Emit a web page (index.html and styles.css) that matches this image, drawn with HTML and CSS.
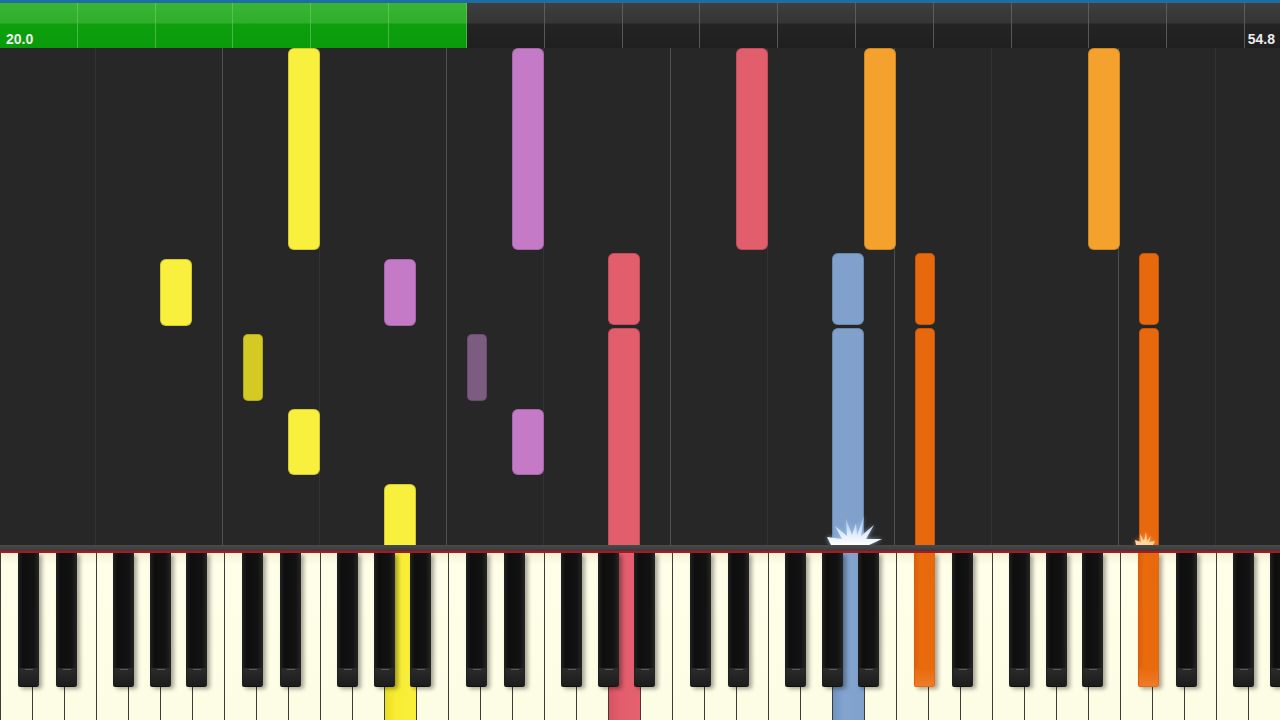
FILE: index.html
```html
<!DOCTYPE html>
<html lang="en">
<head>
<meta charset="utf-8">
<title>Piano roll</title>
<link rel="stylesheet" href="styles.css">
</head>
<body>
<div class="screen">
  <header class="timeline">
    <div class="progress"><span class="time">20.0</span></div>
    <div class="remaining"><span class="time">54.8</span></div>
  </header>

  <main class="roll">
    <div class="note w yellow" style="left:287.5px;top:0;height:202px"></div>
    <div class="note w purple" style="left:511.5px;top:0;height:202px"></div>
    <div class="note w red" style="left:735.5px;top:0;height:202px"></div>
    <div class="note w amber" style="left:863.5px;top:0;height:202px"></div>
    <div class="note w amber" style="left:1087.5px;top:0;height:202px"></div>

    <div class="note w yellow" style="left:159.5px;top:211px;height:67px"></div>
    <div class="note w purple" style="left:383.5px;top:211px;height:67px"></div>
    <div class="note w red" style="left:607.5px;top:205px;height:72px"></div>
    <div class="note w red" style="left:607.5px;top:280px;height:240px"></div>
    <div class="note w blue" style="left:831.5px;top:205px;height:72px"></div>
    <div class="note w blue" style="left:831.5px;top:280px;height:240px"></div>
    <div class="note b orange" style="left:914.5px;top:205px;height:72px"></div>
    <div class="note b orange" style="left:914.5px;top:280px;height:240px"></div>
    <div class="note b orange" style="left:1138.5px;top:205px;height:72px"></div>
    <div class="note b orange" style="left:1138.5px;top:280px;height:240px"></div>

    <div class="note b yellow-dim" style="left:242.5px;top:286px;height:67px"></div>
    <div class="note b purple-dim" style="left:466.5px;top:286px;height:67px"></div>

    <div class="note w yellow" style="left:287.5px;top:361px;height:66px"></div>
    <div class="note w purple" style="left:511.5px;top:361px;height:66px"></div>
    <div class="note w yellow" style="left:383.5px;top:436px;height:80px"></div>

    <svg class="flare blue-flare" viewBox="0 0 56 30" width="56" height="30" aria-hidden="true">
      <defs>
        <linearGradient id="fb" x1="0" y1="1" x2="0" y2="0">
          <stop offset="0" stop-color="#ffffff"/>
          <stop offset="0.45" stop-color="#dce9fb"/>
          <stop offset="1" stop-color="#8fb4e4"/>
        </linearGradient>
      </defs>
      <polygon fill="url(#fb)" points="4,30 0,22 15,24 8,11 20,21 19,4 25,20 29,8 30,20 37,1 34,21 47,10 39,24 55,24 42,30"/>
    </svg>
    <svg class="flare orange-flare" viewBox="0 0 22 14" width="22" height="14" aria-hidden="true">
      <polygon fill="#ffd39a" points="2,14 1,9 7,11 6,3 10,10 12,1 13,10 17,5 15,11 21,10 19,14"/>
    </svg>
  </main>

  <section class="keyboard">
    <div class="rail"></div>
    <div class="keys">
      <div class="octave">
        <div class="wk"></div><div class="wk"></div><div class="wk"></div><div class="wk"></div><div class="wk"></div><div class="wk"></div><div class="wk"></div>
        <div class="bk cs"></div><div class="bk ds"></div><div class="bk fs"></div><div class="bk gs"></div><div class="bk as"></div>
      </div>
      <div class="octave">
        <div class="wk"></div><div class="wk"></div><div class="wk"></div><div class="wk"></div><div class="wk"></div><div class="wk hl-yellow"></div><div class="wk"></div>
        <div class="bk cs"></div><div class="bk ds"></div><div class="bk fs"></div><div class="bk gs"></div><div class="bk as"></div>
      </div>
      <div class="octave">
        <div class="wk"></div><div class="wk"></div><div class="wk"></div><div class="wk"></div><div class="wk"></div><div class="wk hl-red"></div><div class="wk"></div>
        <div class="bk cs"></div><div class="bk ds"></div><div class="bk fs"></div><div class="bk gs"></div><div class="bk as"></div>
      </div>
      <div class="octave">
        <div class="wk"></div><div class="wk"></div><div class="wk"></div><div class="wk"></div><div class="wk"></div><div class="wk hl-blue"></div><div class="wk"></div>
        <div class="bk cs"></div><div class="bk ds"></div><div class="bk fs"></div><div class="bk gs"></div><div class="bk as"></div>
      </div>
      <div class="octave">
        <div class="wk"></div><div class="wk"></div><div class="wk"></div><div class="wk"></div><div class="wk"></div><div class="wk"></div><div class="wk"></div>
        <div class="bk cs hl-orange"></div><div class="bk ds"></div><div class="bk fs"></div><div class="bk gs"></div><div class="bk as"></div>
      </div>
      <div class="octave last">
        <div class="wk"></div><div class="wk"></div><div class="wk"></div><div class="wk"></div><div class="wk"></div>
        <div class="bk cs hl-orange"></div><div class="bk ds"></div><div class="bk fs"></div><div class="bk gs"></div>
      </div>
    </div>
  </section>
</div>
</body>
</html>
```

FILE: styles.css
```css
html, body {
  margin: 0;
  padding: 0;
  background: #262626;
}

body {
  font-family: "Liberation Sans", Arial, sans-serif;
}

.screen {
  width: 1280px;
  height: 720px;
  display: flex;
  flex-direction: column;
  overflow: hidden;
}

/* ---------- timeline ---------- */
.timeline {
  flex: none;
  height: 48px;
  box-sizing: border-box;
  border-top: 3px solid #1f6ea3;
  display: flex;
}

.progress {
  flex: none;
  width: 467px;
  box-sizing: border-box;
  display: flex;
  align-items: flex-end;
  padding: 0 0 2px 6px;
  background:
    repeating-linear-gradient(90deg, transparent 0 76.8px, rgba(120, 205, 110, 0.55) 76.8px 77.8px),
    linear-gradient(#38b534 0, #2fae2b 20px, #0d9f0d 21px, #0a9b0a 100%);
}

.remaining {
  flex: 1;
  box-sizing: border-box;
  display: flex;
  justify-content: flex-end;
  align-items: flex-end;
  padding: 0 5px 2px 0;
  background:
    repeating-linear-gradient(90deg, transparent 0 76.8px, rgba(105, 105, 105, 0.75) 76.8px 77.8px),
    linear-gradient(#3e3e3e 0, #353535 20px, #242424 21px, #1f1f1f 100%);
}

.time {
  color: #ececec;
  font-weight: bold;
  font-size: 14px;
  line-height: 14px;
}

/* ---------- note roll ---------- */
.roll {
  flex: none;
  position: relative;
  height: 497px;
  overflow: hidden;
  background:
    repeating-linear-gradient(90deg,
      transparent 0 95px,
      #333333 95px 96px,
      transparent 96px 222px,
      #4f4f4f 222px 223.5px,
      transparent 223.5px 224px),
    #272727;
}

.note {
  position: absolute;
  box-sizing: border-box;
  border-radius: 6px;
  box-shadow: inset 0 0 0 1px rgba(0, 0, 0, 0.16);
}

.note.w { width: 32px; }
.note.b { width: 20px; border-radius: 5px; }

.yellow { background: #f9ef3d; }
.yellow-dim { background: #d5ca24; }
.purple { background: #c47ac7; }
.purple-dim { background: #7d5c81; }
.red { background: #e35e6d; }
.amber { background: #f4a12d; }
.orange { background: #e8690d; }
.blue { background: #7fa1cc; }

.flare {
  position: absolute;
  filter: drop-shadow(0 0 2px rgba(170, 205, 250, 0.8));
}

.blue-flare {
  left: 827px;
  top: 467px;
}

.orange-flare {
  left: 1134px;
  top: 483px;
  filter: drop-shadow(0 0 2px rgba(255, 190, 120, 0.7));
}

/* ---------- keyboard ---------- */
.keyboard {
  flex: 1;
  display: flex;
  flex-direction: column;
  min-height: 0;
}

.rail {
  flex: none;
  height: 6px;
  background: linear-gradient(#4a4a4a, #3a3a3a);
  border-bottom: 2px solid #b3141e;
}

.keys {
  flex: 1;
  display: flex;
  overflow: hidden;
}

.octave {
  position: relative;
  display: flex;
  flex: none;
}

.wk {
  width: 32px;
  height: 167px;
  box-sizing: border-box;
  border-left: 1px solid #3d3d38;
  background: linear-gradient(#f3f2d6 0, #fffee8 12px, #fdfce4 100%);
}

.wk.hl-yellow { background: linear-gradient(90deg, #e9dd22, #f8ed34 35%, #f9ef3a); }
.wk.hl-red { background: linear-gradient(90deg, #d85262, #e35e6d 35%, #e56170); }
.wk.hl-blue { background: linear-gradient(90deg, #6f93c2, #82a4cf 35%, #7fa1cc); }

.bk {
  position: absolute;
  top: 0;
  width: 21px;
  height: 134px;
  box-sizing: border-box;
  border-radius: 0 0 2px 2px;
  background: linear-gradient(90deg, #222 0, #0e0e0e 22%, #121212 75%, #262626 100%);
  box-shadow: 3px 2px 4px rgba(0, 0, 0, 0.35);
}

.bk::after {
  content: "";
  position: absolute;
  left: 1px;
  right: 1px;
  bottom: 1px;
  height: 18px;
  background: linear-gradient(#2b2b2b, #1c1c1c);
  border-radius: 0 0 2px 2px;
}

.bk::before {
  content: "";
  position: absolute;
  left: 7px;
  width: 8px;
  bottom: 17px;
  height: 1px;
  background: #5a5a5a;
  z-index: 1;
}

.bk.hl-orange {
  background: linear-gradient(90deg, #d95e08, #ea6b0e 30%, #e8690d);
}

.bk.hl-orange::after {
  background: linear-gradient(#e8690d, #ee7c28);
}

.bk.hl-orange::before {
  background: transparent;
}

.cs { left: 18px; }
.ds { left: 56px; }
.fs { left: 113px; }
.gs { left: 149.5px; }
.as { left: 186px; }
```
